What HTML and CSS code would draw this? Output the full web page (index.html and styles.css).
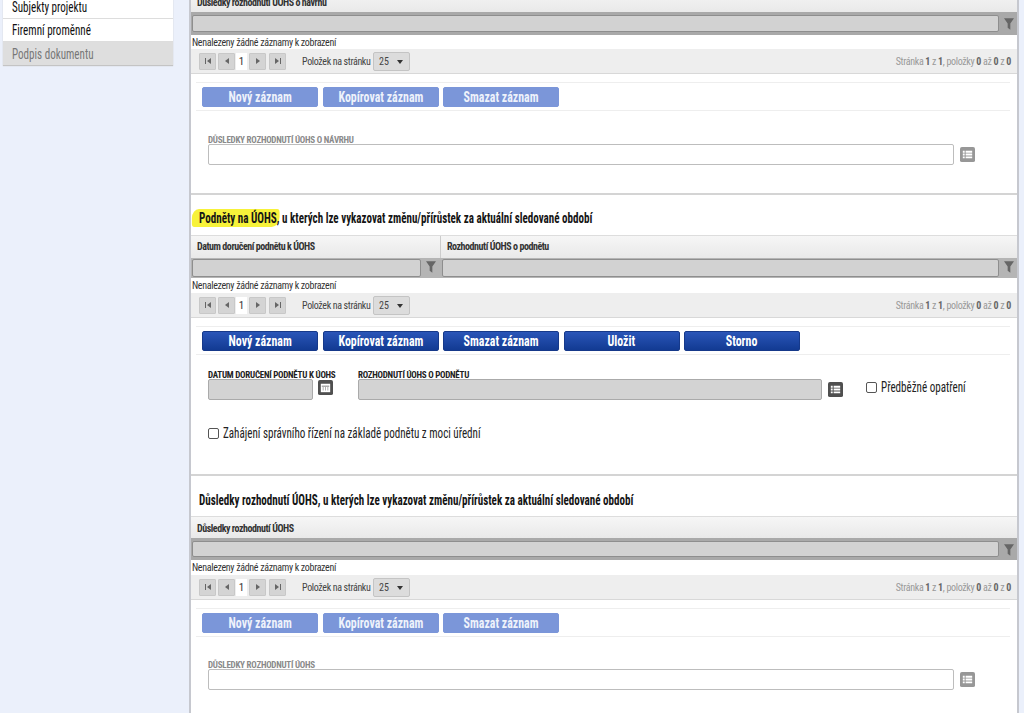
FILE: index.html
```html
<!DOCTYPE html>
<html lang="cs">
<head>
<meta charset="utf-8">
<title>Podněty na ÚOHS</title>
<link rel="stylesheet" href="styles.css">
</head>
<body>
<svg class="defs" width="0" height="0" aria-hidden="true">
  <symbol id="i-filter" viewBox="0 0 12 14"><path d="M0 0h12L7.6 6.5V14L4.4 11.500V6.5z"/></symbol>
  <symbol id="i-first" viewBox="0 0 8 8"><path d="M1 1h1v6H1zM7 1v6L3 4z"/></symbol>
  <symbol id="i-prev" viewBox="0 0 8 8"><path d="M6 1v6L2 4z"/></symbol>
  <symbol id="i-next" viewBox="0 0 8 8"><path d="M2 1v6l4-3z"/></symbol>
  <symbol id="i-last" viewBox="0 0 8 8"><path d="M1 1v6l4-3zM6 1h1v6H6z"/></symbol>
  <symbol id="i-list" viewBox="0 0 16 16"><rect width="16" height="16" rx="2" fill="currentColor"/><path d="M3 4h2v2H3zM6 4h7v2H6zM3 7h2v2H3zM6 7h7v2H6zM3 10h2v2H3zM6 10h7v2H6z" fill="#fff"/></symbol>
  <symbol id="i-cal" viewBox="0 0 16 16"><rect width="16" height="16" rx="2" fill="currentColor"/><path d="M3 4h10v9H3z" fill="#fff"/><path d="M4 6h8v1H4zM5 8h1v1H5zM7.500 8h1v1h-1zM10 8h1v1h-1zM5 10h1v1H5zM7.500 10h1v1h-1zM10 10h1v1h-1z" fill="#555"/></symbol>
</svg>
<div class="page">
  <aside class="side">
    <a class="side-item"><span class="cond">Subjekty projektu</span></a>
    <a class="side-item"><span class="cond">Firemní proměnné</span></a>
    <a class="side-item off"><span class="cond">Podpis dokumentu</span></a>
  </aside>
  <main class="main">
    <section class="sec sec-a">
      <div class="grid-head"><div class="th">Důsledky rozhodnutí ÚOHS o návrhu</div></div>
      <div class="grid-filter"><div class="fcell"><span class="finput"></span><svg class="ficon"><use href="#i-filter"/></svg></div></div>
      <div class="empty">Nenalezeny žádné záznamy k zobrazení</div>
      <div class="pager">
        <span class="pbtn"><svg><use href="#i-first"/></svg></span><span class="pbtn"><svg><use href="#i-prev"/></svg></span><span class="pnum">1</span><span class="pbtn"><svg><use href="#i-next"/></svg></span><span class="pbtn"><svg><use href="#i-last"/></svg></span>
        <span class="plabel">Položek na stránku</span><span class="psel">25<i></i></span>
        <span class="pinfo">Stránka <b>1</b> z <b>1</b>, položky <b>0</b> až <b>0</b> z <b>0</b></span>
      </div>
      <div class="bar dim"><button class="btn"><span>Nový záznam</span></button><button class="btn"><span>Kopírovat záznam</span></button><button class="btn"><span>Smazat záznam</span></button></div>
      <div class="form form-a">
        <div class="field grow dimf"><label>Důsledky rozhodnutí ÚOHS o návrhu</label><div class="row"><span class="inp"></span><svg class="sq light"><use href="#i-list"/></svg></div></div>
      </div>
    </section>
    <section class="sec sec-b">
      <h2 class="title"><span class="cond"><span class="hl">Podněty na ÚOHS,</span> u kterých lze vykazovat změnu/přírůstek za aktuální sledované období</span></h2>
      <div class="grid-head two"><div class="th c1">Datum doručení podnětu k ÚOHS</div><div class="th">Rozhodnutí ÚOHS o podnětu</div></div>
      <div class="grid-filter two"><div class="fcell c1"><span class="finput"></span><svg class="ficon"><use href="#i-filter"/></svg></div><div class="fcell"><span class="finput"></span><svg class="ficon"><use href="#i-filter"/></svg></div></div>
      <div class="empty">Nenalezeny žádné záznamy k zobrazení</div>
      <div class="pager">
        <span class="pbtn"><svg><use href="#i-first"/></svg></span><span class="pbtn"><svg><use href="#i-prev"/></svg></span><span class="pnum">1</span><span class="pbtn"><svg><use href="#i-next"/></svg></span><span class="pbtn"><svg><use href="#i-last"/></svg></span>
        <span class="plabel">Položek na stránku</span><span class="psel">25<i></i></span>
        <span class="pinfo">Stránka <b>1</b> z <b>1</b>, položky <b>0</b> až <b>0</b> z <b>0</b></span>
      </div>
      <div class="bar"><button class="btn"><span>Nový záznam</span></button><button class="btn"><span>Kopírovat záznam</span></button><button class="btn"><span>Smazat záznam</span></button><button class="btn"><span>Uložit</span></button><button class="btn"><span>Storno</span></button></div>
      <div class="form form-b">
        <div class="field date"><label>Datum doručení podnětu k ÚOHS</label><div class="row"><span class="inp gray"></span><svg class="sq"><use href="#i-cal"/></svg></div></div>
        <div class="field grow"><label>Rozhodnutí ÚOHS o podnětu</label><div class="row"><span class="inp gray"></span><svg class="sq"><use href="#i-list"/></svg></div></div>
        <div class="check side-check"><span class="box"></span><span class="cond">Předběžné opatření</span></div>
      </div>
      <div class="check wide-check"><span class="box"></span><span class="cond">Zahájení správního řízení na základě podnětu z moci úřední</span></div>
    </section>
    <section class="sec sec-c">
      <h2 class="title"><span class="cond">Důsledky rozhodnutí ÚOHS, u kterých lze vykazovat změnu/přírůstek za aktuální sledované období</span></h2>
      <div class="grid-head"><div class="th">Důsledky rozhodnutí ÚOHS</div></div>
      <div class="grid-filter"><div class="fcell"><span class="finput"></span><svg class="ficon"><use href="#i-filter"/></svg></div></div>
      <div class="empty">Nenalezeny žádné záznamy k zobrazení</div>
      <div class="pager">
        <span class="pbtn"><svg><use href="#i-first"/></svg></span><span class="pbtn"><svg><use href="#i-prev"/></svg></span><span class="pnum">1</span><span class="pbtn"><svg><use href="#i-next"/></svg></span><span class="pbtn"><svg><use href="#i-last"/></svg></span>
        <span class="plabel">Položek na stránku</span><span class="psel">25<i></i></span>
        <span class="pinfo">Stránka <b>1</b> z <b>1</b>, položky <b>0</b> až <b>0</b> z <b>0</b></span>
      </div>
      <div class="bar dim"><button class="btn"><span>Nový záznam</span></button><button class="btn"><span>Kopírovat záznam</span></button><button class="btn"><span>Smazat záznam</span></button></div>
      <div class="form form-a">
        <div class="field grow dimf"><label>Důsledky rozhodnutí ÚOHS</label><div class="row"><span class="inp"></span><svg class="sq light"><use href="#i-list"/></svg></div></div>
      </div>
    </section>
  </main>
</div>
</body>
</html>
```
FILE: styles.css
```css
* { box-sizing: border-box; }
html, body { margin: 0; height: 100%; overflow: hidden; }
body {
  background: #ebf0fb;
  color: #111;
  font-family: "Liberation Sans Narrow", "Roboto Condensed", Roboto, sans-serif;
  font-size: 12px;
}
.defs { position: absolute; }
.page { display: flex; align-items: flex-start; height: 713px; overflow: hidden; }
.cond { display: inline-block; white-space: nowrap; transform: scaleX(.79); transform-origin: left center; }

.side {
  flex: none;
  width: 170px;
  margin: -5px 16px 0 3px;
  background: #fff;
  box-shadow: 0 1px 1px #c4c4c4;
}
.side-item {
  display: flex;
  align-items: center;
  height: 23px;
  padding-left: 9px;
  font-size: 14px;
  border-bottom: 1px solid #ddd;
}
.side-item:first-child { height: 24px; }
.side-item.off { background: #dedede; color: #777; border-bottom: 0; }

.main {
  flex: none;
  width: 830px;
  margin-top: -10px;
  background: #fff;
  border-left: 2px solid #c6c8cf;
  border-right: 2px solid #c6c8cf;
}
.sec { border-bottom: 2px solid #d4d4d4; }
.sec-a { height: 205px; }
.sec-b { height: 281px; }
.sec-c { height: 260px; border-bottom: 0; }

.title {
  margin: 0;
  height: 40px;
  padding: 16px 0 0 8px;
  font-size: 14px;
  line-height: 17px;
  font-weight: 700;
  color: #151515;
}
.sec-b .title { padding-top: 15px; }
.hl {
  background: #f7f23a;
  border-radius: 9px 3px 10px 3px;
  padding: 1px 0 1px 9px;
  margin-left: -9px;
}

.grid-head {
  display: grid;
  grid-template-columns: 1fr;
  height: 22px;
  background: linear-gradient(#f6f6f6, #e9e9e9);
  border-top: 1px solid #ddd;
}
.sec-a .grid-head { border-top: 0; }
.sec-b .grid-head { height: 23px; }
.grid-head.two, .grid-filter.two { grid-template-columns: 250px 1fr; }
.th { padding: 5px 0 0 6px; font-size: 10px; line-height: 14px; font-weight: 700; letter-spacing: -.45px; color: #333; white-space: nowrap; }
.sec-a .th { padding-top: 6px; }
.sec-b .th { padding-top: 4px; }
.th.c1 { border-right: 1px solid #ccc; }

.grid-filter {
  display: grid;
  grid-template-columns: 1fr;
  height: 23px;
  background: #a9a9a9;
  padding: 3px 0;
}
.sec-b .grid-filter { height: 20px; padding: 1px 0; background: #b5b5b5; }
.sec-c .grid-filter { height: 22px; }
.fcell { display: flex; align-items: stretch; padding-left: 1px; }
.finput { flex: 1; background: #d2d2d2; border: 1px solid #8e8e8e; border-radius: 2px; }
.ficon { width: 10px; height: 12px; margin: 3px 3px 0 5px; fill: #666; flex: none; }
.sec-b .ficon { margin-top: 2px; }
.two .c1 .ficon { margin-right: 5px; }

.empty { height: 15px; padding-left: 1px; font-size: 10px; letter-spacing: -.33px; line-height: 15px; color: #333; white-space: nowrap; }
.sec-a .empty { height: 14px; }

.pager {
  display: flex;
  align-items: center;
  height: 25px;
  padding: 0 6px 0 8px;
  background: #eeeeee;
  border-bottom: 1px solid #d8d8d8;
  font-size: 10px;
  color: #444;
}
.pbtn {
  display: flex; align-items: center; justify-content: center;
  width: 17px; height: 17px; margin-right: 2px;
  background: #d4d4d4; border: 1px solid #c8c8c8; border-radius: 1px;
  fill: #666;
}
.pbtn svg { width: 8px; height: 8px; }
.pnum { display: flex; align-items: center; justify-content: center; width: 11px; height: 17px; margin: 0 2px 0 -1px; background: #fff; color: #333; font-size: 11px; }
.pnum + .pbtn { margin-right: 3px; }
.plabel { width: 68px; margin: 0 3px 0 14px; letter-spacing: -.35px; white-space: nowrap; }
.psel {
  position: relative; width: 37px; height: 19px; padding-left: 5px; line-height: 18px;
  background: #dcdcdc; border: 1px solid #c4c4c4; border-radius: 2px; font-size: 10px;
}
.psel i { position: absolute; right: 6px; top: 7px; border: 3.5px solid transparent; border-top: 4px solid #333; border-bottom: 0; }
.pinfo { margin-left: auto; letter-spacing: -.33px; color: #999; white-space: nowrap; }
.pinfo b { color: #666; }

.bar {
  display: flex; gap: 4.5px; align-items: center;
  height: 29px;
  margin: 8px 7px 0 5px;
  padding: 0 0 0 6px;
  border-top: 1px solid #eee;
  border-bottom: 1px solid #eee;
}
.btn {
  width: 116px; height: 20px; padding: 0;
  font: 700 14px "Liberation Sans Narrow", "Roboto Condensed", Roboto, sans-serif;
  color: #fff;
  background: linear-gradient(#2a55b8, #123a92);
  border: 1px solid #16398a;
  border-radius: 2px;
}
.btn span { display: inline-block; white-space: nowrap; transform: scaleX(.85); }
.dim .btn { background: #7b96d9; border-color: #7b96d9; color: #eef2fb; }

.form { display: flex; padding-left: 17px; }
.form-a { padding: 22px 42px 0 17px; }
.sec-c .form-a { padding-top: 21px; }
.form-b { padding-top: 13px; height: 65px; }
.field { display: flex; flex-direction: column; }
.field.grow { flex: 1; }
.field label { height: 11px; font-size: 9px; line-height: 14px; font-weight: 700; text-transform: uppercase; color: #222; letter-spacing: -.25px; white-space: nowrap; }
.dimf label { color: #8a8a8a; }
.row { display: flex; align-items: center; }
.inp { flex: 1; height: 21px; background: #fff; border: 1px solid #bdbdbd; border-radius: 2px; }
.inp.gray { background: #d3d3d3; border-color: #aaa; }
.sq { width: 15px; height: 15px; margin-left: 6px; color: #4f4f4f; flex: none; }
.sq.light { color: #979797; }
.date { width: 125px; margin-right: 25px; }
.date .sq { margin-left: 5px; margin-top: -4px; }
.form-b .grow { flex: none; width: 485px; }
.check { display: flex; align-items: center; font-size: 14px; color: #222; }
.box { width: 11px; height: 11px; margin-right: 4px; border: 1px solid #555; border-radius: 2px; background: #fff; flex: none; }
.side-check { margin-left: 23px; height: 20px; margin-top: 9px; }
.wide-check { margin: 3px 0 0 17px; height: 20px; }
```
